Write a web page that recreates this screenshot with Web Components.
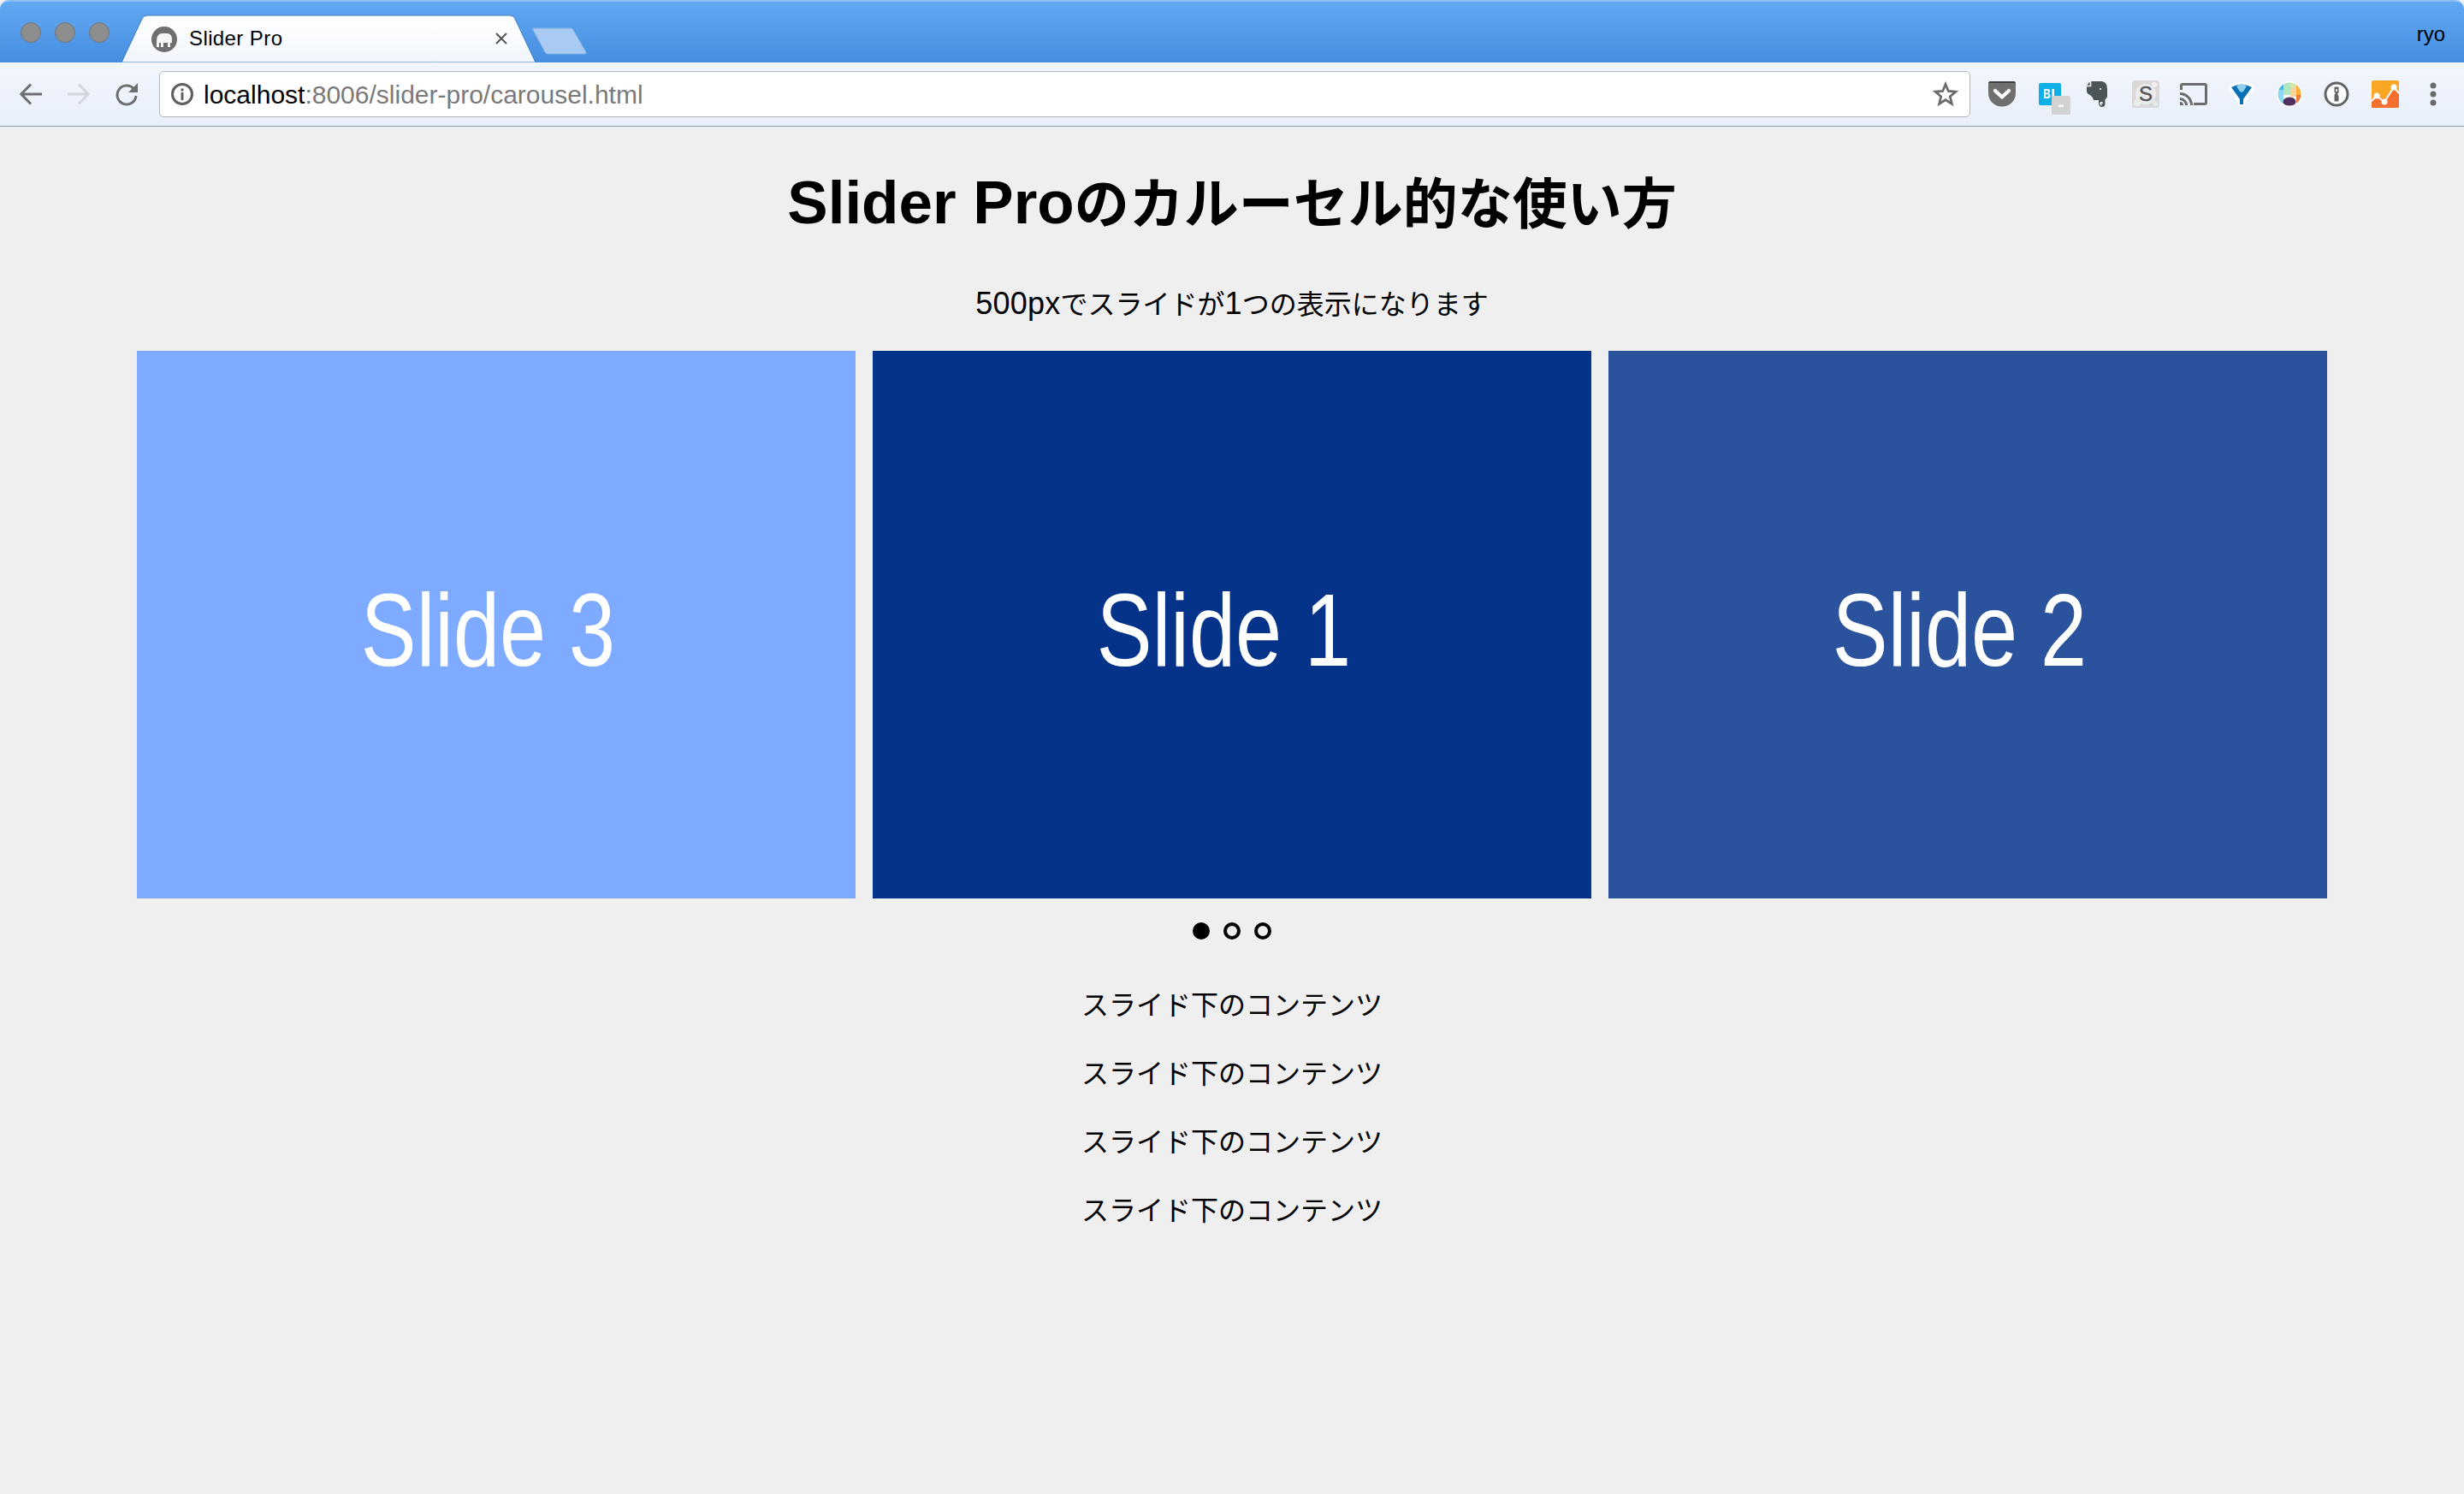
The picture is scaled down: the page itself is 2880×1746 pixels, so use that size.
<!DOCTYPE html>
<html lang="ja">
<head>
<meta charset="utf-8">
<title>Slider Pro</title>
<style>
  html, body { margin: 0; height: 100%; background: #efefef; overflow: hidden; }
  body { font-family: "Liberation Sans", "Noto Sans CJK JP", sans-serif; color: #000; }
</style>
</head>
<body>
<browser-chrome tab-title="Slider Pro" host="localhost" path=":8006/slider-pro/carousel.html" user="ryo"></browser-chrome>
<demo-page heading="Slider Proのカルーセル的な使い方" lead="500pxでスライドが1つの表示になります">
  <slide-carousel>
    <slide-panel color="#7eaaff">Slide 3</slide-panel>
    <slide-panel color="#05338a">Slide 1</slide-panel>
    <slide-panel color="#2b529c">Slide 2</slide-panel>
  </slide-carousel>
  <p>スライド下のコンテンツ</p>
  <p>スライド下のコンテンツ</p>
  <p>スライド下のコンテンツ</p>
  <p>スライド下のコンテンツ</p>
</demo-page>

<script>
const ICONS = {
  back: `<svg width="26" height="26" viewBox="0 0 26 26" fill="none" stroke="#6e6e6e" stroke-width="3"><path d="M26 13H2M13 1.500L1.800 13 13 24.500"/></svg>`,
  forward: `<svg width="26" height="26" viewBox="0 0 26 26" fill="none" stroke="#d3d7dd" stroke-width="3"><path d="M0 13H24M13 1.500L24.200 13 13 24.500"/></svg>`,
  reload: `<svg width="27" height="27" viewBox="0 0 27 27"><path d="M21.500 7A11 11 0 1 0 24 15" fill="none" stroke="#6e6e6e" stroke-width="3"/><path d="M26 0V11H15Z" fill="#6e6e6e"/></svg>`,
  info: `<svg width="28" height="28" viewBox="0 0 28 28"><circle cx="14" cy="14" r="11.500" fill="none" stroke="#5f5f5f" stroke-width="3"/><rect x="12.500" y="12" width="3" height="9" fill="#5f5f5f"/><rect x="12.500" y="7.500" width="3" height="3" fill="#5f5f5f"/></svg>`,
  star: `<svg width="30" height="30" viewBox="0 0 30 30"><path d="M15 3.500L18.300 11.500 26.800 12.200 20.300 17.800 22.300 26.200 15 21.700 7.700 26.200 9.700 17.800 3.200 12.200 11.700 11.500Z" fill="none" stroke="#6b6b6b" stroke-width="2.800"/></svg>`,
  pocket: `<svg width="32" height="30" viewBox="0 0 32 30"><path d="M0 3Q0 0 3 0H29Q32 0 32 3V14A16 15.500 0 0 1 0 14Z" fill="#6f6f6f"/><path d="M0 3Q0 0 3 0H29Q32 0 32 3V2H0Z" fill="#3f3f3f"/><path d="M8 11L16 18.500 24 11" fill="none" stroke="#fff" stroke-width="4.200" stroke-linecap="round" stroke-linejoin="round"/></svg>`,
  hatena: `<svg width="38" height="38" viewBox="0 0 38 38"><rect x="0" y="0" width="26" height="26" rx="2" fill="#0fb0e8"/><path d="M6 7H10.500Q13 7 13 9.500Q13 11.500 11 12Q13.500 12.500 13.500 15Q13.500 18 10.500 18H6ZM8 9V11.500H10Q11 11.500 11 10.200T10 9ZM8 13.300V16H10.300Q11.500 16 11.500 14.600T10.300 13.300Z" fill="#fff"/><rect x="15.500" y="7" width="2.500" height="9" fill="#fff"/><rect x="15" y="15" width="22" height="22" rx="2" fill="#d2d2d2"/><rect x="23" y="25.500" width="6" height="2.500" fill="#fff"/></svg>`,
  evernote: `<svg width="26" height="32" viewBox="0 0 26 32"><path d="M6 1Q2 3 1 7V12Q1 16 5 17Q8 19 9 23H15V26Q15 31 19 31Q22.500 31 22.500 27V22Q25 21 25 18V10Q25 2 19 1Z" fill="#4b5557"/><path d="M5.500 1V6.500H1" fill="none" stroke="#fff" stroke-width="1.600"/><path d="M19.500 27Q19 25.300 17.500 26T18.500 29" fill="none" stroke="#fff" stroke-width="1.500"/><circle cx="17" cy="10" r="1" fill="#fff"/></svg>`,
  stylish: `<svg width="32" height="32" viewBox="0 0 32 32"><rect width="32" height="32" rx="3" fill="#d9d9d9"/><circle cx="6" cy="26" r="4" fill="#ececec"/><circle cx="26" cy="5" r="3" fill="#f1f1f1"/><circle cx="27" cy="27" r="3" fill="#e8e8e8"/><circle cx="16" cy="16" r="12" fill="#ebebeb"/><text x="16" y="24" text-anchor="middle" font-family="Liberation Sans" font-size="24" fill="#555" stroke="#555" stroke-width="0.500">S</text></svg>`,
  cast: `<svg width="32" height="26" viewBox="0 0 32 26"><path d="M1.500 8V3.200Q1.500 1.500 3.200 1.500H28.800Q30.500 1.500 30.500 3.200V22.800Q30.500 24.500 28.800 24.500H16" fill="none" stroke="#6b6b6b" stroke-width="3"/><path d="M0 11A15 15 0 0 1 15 26H12A12 12 0 0 0 0 14ZM0 17A9 9 0 0 1 9 26H6A6 6 0 0 0 0 20ZM0 22A4 4 0 0 1 4 26H0Z" fill="#6b6b6b"/></svg>`,
  funnel: `<svg width="30" height="31" viewBox="0 0 30 31"><path d="M15 30Q11.500 30 11 26L1 10Q-1 5 4 3Q15 -2 26 3Q31 5 29 10L19 26Q18.500 30 15 30Z" fill="#fff"/><path d="M3 7Q15 0 27 7L17 21V27H13V21Z" fill="#0b71b5"/><path d="M9 5Q15 2 21 5Q18 12 15 13Q12 12 9 5Z" fill="#8ed0ee"/></svg>`,
  palette: `<svg width="30" height="30" viewBox="0 0 30 30"><defs><clipPath id="c"><circle cx="15" cy="15" r="13.500"/></clipPath></defs><circle cx="15" cy="15" r="15" fill="#fff"/><g clip-path="url(#c)"><rect width="8" height="10" fill="#43b8d8"/><rect x="8" width="8" height="16" fill="#b5e6c2"/><rect x="16" width="7" height="8" fill="#d6e5a8"/><rect x="23" width="7" height="16" fill="#fcae3b"/><rect y="10" width="8" height="20" fill="#8ed8f0"/><rect x="16" y="8" width="7" height="10" fill="#fbd29a"/><rect x="23" y="16" width="7" height="14" fill="#ef7a34"/><ellipse cx="15" cy="24" rx="7.500" ry="5.500" fill="#532f5e"/></g></svg>`,
  onepassword: `<svg width="30" height="30" viewBox="0 0 30 30"><circle cx="15" cy="15" r="13" fill="#fff" stroke="#636363" stroke-width="3"/><path d="M12.500 6.500H17.500V13L16 15 17.500 17V23.500H12.500V15.500L14 14 12.500 12.500Z" fill="#636363"/><rect x="14.200" y="9" width="1.600" height="3" fill="#fff"/></svg>`,
  analytics: `<svg width="32" height="32" viewBox="0 0 32 32"><rect width="32" height="32" rx="2" fill="#fba726"/><path d="M0 32V22L6 18 15 22 26 8 32 14V30Q32 32 30 32H2Z" fill="#f36e2f"/><path d="M0 24L6 18 15 25 26 8 32 15" fill="none" stroke="#fff" stroke-width="2"/><circle cx="6" cy="18" r="3.500" fill="#fff"/><circle cx="15" cy="25" r="3.500" fill="#fff"/><circle cx="26" cy="8" r="3.500" fill="#fff"/></svg>`,
  menu: `<svg width="8" height="28" viewBox="0 0 8 28"><circle cx="4" cy="4" r="3.500" fill="#6b6b6b"/><circle cx="4" cy="14" r="3.500" fill="#6b6b6b"/><circle cx="4" cy="24" r="3.500" fill="#6b6b6b"/></svg>`,
  favicon: `<svg width="30" height="30" viewBox="0 0 30 30"><circle cx="15" cy="15" r="15" fill="#6f6f6f"/><path d="M6 17Q6 8 13 8H18Q24 8 24 15V19H22V24H19V19H14V24H11V19H9V24H6Z" fill="#f4f4f4"/></svg>`
};

class BrowserChrome extends HTMLElement {
  constructor() {
    super();
    this.attachShadow({ mode: 'open' });
    this.render();
  }

  render() {
    const tabTitle = this.getAttribute('tab-title');
    const host = this.getAttribute('host');
    const path = this.getAttribute('path');
    const user = this.getAttribute('user');
    this.shadowRoot.innerHTML = `
    <style>
      :host {
        display: block;
        font-family: "Liberation Sans", sans-serif;
      }
      .tabstrip {
        height: 73px;
        box-sizing: border-box;
        display: flex;
        align-items: flex-start;
        background: linear-gradient(#62a8f2, #458ee0);
        border-top: 2px solid #8cc0f5;
        border-radius: 10px 10px 0 0;
      }
      .lights {
        display: flex;
        gap: 16px;
        padding: 24px 0 0 24px;
        width: 120px;
        box-sizing: border-box;
      }
      .lights i {
        width: 24px;
        height: 24px;
        flex: none;
        box-sizing: border-box;
        border-radius: 50%;
        background: #8d8d8d;
        border: 1px solid #767676;
      }
      .tab {
        position: relative;
        width: 484px;
        height: 56px;
        margin: 15px 0 0 22px;
        display: flex;
        align-items: center;
        box-sizing: border-box;
        padding-left: 35px;
        font-size: 24px;
        color: #000;
      }
      .tab svg.shape {
        position: absolute;
        left: 0;
        top: 0;
      }
      .tab .fav, .tab .label, .tab .close { position: relative; }
      .tab .fav { width: 30px; height: 30px; margin-top: 1px; }
      .tab .label { margin-left: 14px; flex: 1; letter-spacing: 0.4px; }
      .tab .close { margin-right: 32px; }
      .newtab { margin: 29px 0 0 -5px; }
      .user {
        margin-left: auto;
        padding: 24px 22px 0 0;
        font-size: 24px;
        line-height: 28px;
        color: #000;
      }
      .toolbar {
        height: 75px;
        box-sizing: border-box;
        display: flex;
        align-items: center;
        padding-left: 23px;
        background: linear-gradient(#f2f6fd, #e9f0fa);
        border-bottom: 1px solid #8a9db8;
      }
      .toolbar span { display: flex; flex: none; }
      .omnibox {
        width: 2117px;
        height: 54px;
        margin-left: 24px;
        box-sizing: border-box;
        display: flex;
        align-items: center;
        padding-left: 12px;
        background: #fff;
        border: 1px solid #b4b6ba;
        border-radius: 5px;
        font-size: 30px;
        color: #000;
      }
      .omnibox .url { margin-left: 11px; padding-top: 1px; flex: 1; white-space: nowrap; }
      .omnibox .url em { font-style: normal; color: #7a7a7a; }
      .omnibox .star { margin-right: 13px; }
    </style>
    <div class="tabstrip">
      <div class="lights"><i></i><i></i><i></i></div>
      <div class="tab">
        <svg class="shape" width="484" height="56" viewBox="0 0 484 56"><defs><linearGradient id="tabfill" x1="0" y1="0" x2="0" y2="1"><stop offset="0" stop-color="#ffffff"/><stop offset="1" stop-color="#f1f6fd"/></linearGradient></defs><path d="M0 56L24 5Q26 1 30 1H454Q458 1 460 5L484 56Z" fill="url(#tabfill)" stroke="#3a7bc4" stroke-width="1"/></svg>
        <span class="fav">${ICONS.favicon}</span>
        <span class="label">${tabTitle}</span>
        <span class="close"><svg width="16" height="16" viewBox="0 0 16 16"><path d="M2 2L14 14M14 2L2 14" stroke="#555" stroke-width="2"/></svg></span>
      </div>
      <svg class="newtab" width="66" height="34" viewBox="0 0 66 34"><path d="M3 2H46Q48 2 49 4L64 30Q65 32 62 32H19Q17 32 16 30L2 4Q1 2 3 2Z" fill="#a9caf2" stroke="#84b1e6"/></svg>
      <div class="user">${user}</div>
    </div>
    <div class="toolbar">
      <span>${ICONS.back}</span>
      <span style="margin-left:30px">${ICONS.forward}</span>
      <span style="margin-left:30px">${ICONS.reload}</span>
      <div class="omnibox">
        <span>${ICONS.info}</span>
        <div class="url">${host}<em>${path}</em></div>
        <span class="star">${ICONS.star}</span>
      </div>
      <span style="margin-left:21px">${ICONS.pocket}</span>
      <span style="margin-left:27px;margin-top:12px">${ICONS.hatena}</span>
      <span style="margin-left:17px">${ICONS.evernote}</span>
      <span style="margin-left:28px">${ICONS.stylish}</span>
      <span style="margin-left:24px">${ICONS.cast}</span>
      <span style="margin-left:25px">${ICONS.funnel}</span>
      <span style="margin-left:26px">${ICONS.palette}</span>
      <span style="margin-left:25px">${ICONS.onepassword}</span>
      <span style="margin-left:26px">${ICONS.analytics}</span>
      <span style="margin-left:36px">${ICONS.menu}</span>
    </div>
    `;
  }
}

class DemoPage extends HTMLElement {
  constructor() {
    super();
    this.attachShadow({ mode: 'open' });
    // latin runs are set a bit larger than the CJK around them
    const wrapLatin = (text) => text.replace(/[A-Za-z0-9 ]+/g, m => `<span class="latin">${m}</span>`);
    this.shadowRoot.innerHTML = `
    <style>
      :host {
        display: block;
        text-align: center;
        font-family: "Liberation Sans", "Noto Sans CJK JP", sans-serif;
        color: #000;
      }
      h1 {
        margin: 44px 0 0;
        height: 90px;
        font-size: 64px;
        line-height: 90px;
        font-weight: bold;
      }
      h1 .latin { font-size: 71px; }
      .lead {
        margin: 49px 0 31px;
        height: 48px;
        font-size: 32px;
        line-height: 48px;
      }
      .lead .latin { font-size: 36px; letter-spacing: 0.2px; }
      ::slotted(p) {
        margin: 32px 0 0;
        font-size: 32px;
        line-height: 48px;
      }
    </style>
    <h1>${wrapLatin(this.getAttribute('heading'))}</h1>
    <div class="lead">${wrapLatin(this.getAttribute('lead'))}</div>
    <slot></slot>
    `;
  }
}

class SlideCarousel extends HTMLElement {
  constructor() {
    super();
    this.attachShadow({ mode: 'open' });
    this.shadowRoot.innerHTML = `
    <style>
      :host { display: block; }
      .track {
        display: grid;
        grid-template-columns: repeat(3, 840px);
        gap: 20px;
        justify-content: center;
      }
      .dots {
        display: flex;
        justify-content: center;
        gap: 16px;
        padding: 28px 0 21px;
      }
      .dots i {
        width: 20px;
        height: 20px;
        box-sizing: border-box;
        border-radius: 50%;
        border: 4px solid #000;
      }
      .dots i.on { background: #000; }
    </style>
    <div class="track"><slot></slot></div>
    <div class="dots"><i class="on"></i><i></i><i></i></div>
    `;
  }
}

class SlidePanel extends HTMLElement {
  constructor() {
    super();
    this.attachShadow({ mode: 'open' });
    this.shadowRoot.innerHTML = `
    <style>
      :host {
        display: flex;
        height: 640px;
        align-items: center;
        justify-content: center;
        padding: 12px 20px 0 0;
        box-sizing: border-box;
        background: ${this.getAttribute('color')};
        color: #fff;
        font-family: "Liberation Sans", sans-serif;
        font-size: 120px;
      }
      span {
        display: inline-block;
        transform: scaleX(0.81);
        white-space: nowrap;
      }
    </style>
    <span><slot></slot></span>
    `;
  }
}

customElements.define('browser-chrome', BrowserChrome);
customElements.define('demo-page', DemoPage);
customElements.define('slide-carousel', SlideCarousel);
customElements.define('slide-panel', SlidePanel);
</script>
</body>
</html>
